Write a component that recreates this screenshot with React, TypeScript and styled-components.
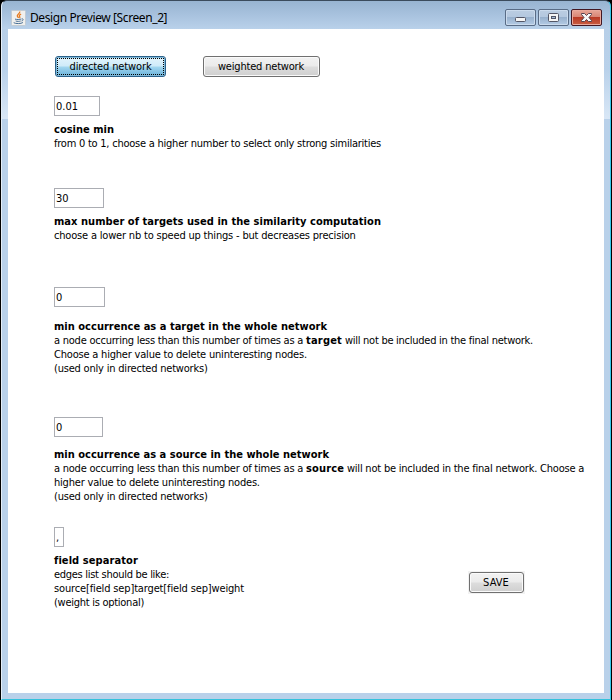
import React from 'react';
import styled, { createGlobalStyle, css } from 'styled-components';

const GlobalStyle = createGlobalStyle`
  body { margin: 0; background: #000; overflow: hidden; }
  * { box-sizing: border-box; }
`;

const uiFont = css`
  font-family: "DejaVu Sans Condensed", "DejaVu Sans", sans-serif;
  font-size: 11px;
  line-height: 14px;
  color: #000;
`;

const Window = styled.div`
  ${uiFont}
  display: flex;
  flex-direction: column;
  width: 612px;
  height: 700px;
  padding: 0 1px 0 1px;
  background: #000;
`;

const Frame = styled.div`
  flex: 1;
  display: flex;
  flex-direction: column;
  border-top: 1px solid #3b4b5c;
  border-left: 1px solid #e4eef8;
  border-right: 1px solid #35c9ea;
  border-bottom: 1px solid #35c2dc;
  border-radius: 6px 6px 0 0;
  overflow: hidden;
  background:
    linear-gradient(#98b4d1, #a8c2de 50%, #b9d1ea) 0 0 / 100% 28px no-repeat,
    linear-gradient(#b7cfe8, #b9d1ea 45%, #d9e7f6) 0 28px / 100% 90px no-repeat,
    #b9d1ea;
`;

const TitleBar = styled.header`
  display: flex;
  align-items: center;
  height: 28px;
  padding: 5px 8px 0 9px;
`;

const Title = styled.h1`
  flex: 1;
  margin: 0 0 0 4px;
  font: 400 12px/16px "Noto Sans", sans-serif;
  letter-spacing: -0.4px;
  white-space: nowrap;
`;

const Controls = styled.div`
  display: flex;
  gap: 2px;
`;

const ControlButton = styled.button<{ $close?: boolean }>`
  display: flex;
  align-items: center;
  justify-content: center;
  width: 31px;
  height: 17px;
  padding: 0;
  border: 1px solid ${p => (p.$close ? '#431722' : '#596c86')};
  border-radius: 2px;
  box-shadow: inset 0 0 0 1px ${p => (p.$close ? '#e9a99d' : '#cbdbed')};
  background: ${p =>
    p.$close
      ? 'linear-gradient(#e7a798, #d98575 45%, #b93a25 50%, #c95e43)'
      : 'linear-gradient(#bbcde2, #b4c8df 45%, #98b1cd 50%, #b4cbe5)'};
`;

const Client = styled.main`
  flex: 1;
  margin: 0 6px 6px 6px;
  padding: 27px 0 0 46px;
  background: #fff;
`;

const ModeBar = styled.div`
  display: flex;
  gap: 37px;
  height: 22px;
  padding-left: 1px;
`;

const PushButton = styled.button<{ $width: number; $track: number; $active?: boolean }>`
  ${uiFont}
  width: ${p => p.$width}px;
  height: 21px;
  padding: ${p => (p.$active ? '0 0 1px' : '1px 1px 0 0')};
  letter-spacing: ${p => p.$track}px;
  border: 1px solid ${p => (p.$active ? '#2c628b' : '#707070')};
  border-radius: 3px;
  outline: none;
  background: ${p =>
    p.$active
      ? 'linear-gradient(#e3f4fc, #cfebf9 48%, #a3d7f0 52%, #69b2da)'
      : 'linear-gradient(#f2f2f2, #ebebeb 48%, #dddddd 52%, #cfcfcf)'};
  box-shadow: inset 0 0 0 1px ${p => (p.$active ? '#7fb9d9' : '#fafafa')};
`;

const FocusRing = styled.span`
  display: block;
  height: 17px;
  margin: 1px 1px 0;
  line-height: 15px;
  border: 1px dotted #000;
`;

const Field = styled.section<{ $before: number }>`
  margin-top: ${p => p.$before}px;
`;

const Input = styled.input<{ $width: number }>`
  ${uiFont}
  display: block;
  width: ${p => p.$width}px;
  height: 20px;
  margin: 0;
  padding: 0 1px;
  border: 1px solid #abadb3;
  border-radius: 0;
  background: #fff;
  outline: none;
`;

const Description = styled.div<{ $gap: number }>`
  padding-top: ${p => p.$gap}px;
`;

const Line = styled.div`
  height: 14px;
  white-space: pre;
`;

const Run = styled.span<{ $track?: number }>`
  letter-spacing: ${p => p.$track ?? -0.2}px;
`;

const Strong = styled.strong<{ $track?: number }>`
  font-weight: 700;
  letter-spacing: ${p => p.$track ?? 0.03}px;
`;

const LastRow = styled.div`
  display: flex;
  align-items: flex-start;
`;

const LastText = styled.div`
  width: 414px;
`;

const SaveHolder = styled.div`
  display: flex;
  height: 23px;
  margin-top: 24px;
  padding: 1px;
  background: #f2f2f2;
`;

function JavaIcon() {
  return (
    <svg width="15" height="16" viewBox="0 0 15 16" fill="none">
      <rect x=".5" y=".5" width="14" height="15" rx="1" fill="#f0f0ee" stroke="#c2cbd3" />
      <path d="M8.7 1.6c.8 2-3 2.7-2.4 4.4.3.8 1 1.2 1.1 2M10.1 4.2c-1.9.8-2.2 1.4-1.4 2.5.4.6.1 1-.3 1.3" stroke="#e77b20" strokeWidth="1.3" />
      <path d="M4 9.1c1.8.6 4.7.5 6.3-.1M4.7 11c1.6.5 3.6.5 5 0M10.8 8.9c2.1-.3 1.6 1.7-.2 2.1M2.7 12.7c1.8 1.2 7.4 1.2 9.2-.2" stroke="#476f96" />
    </svg>
  );
}

function MinimizeIcon() {
  return (
    <svg width="11" height="9" viewBox="0 0 11 9">
      <rect x=".5" y="4.5" width="10" height="4" rx="1" fill="#f5f5f5" stroke="#535666" />
    </svg>
  );
}

function MaximizeIcon() {
  return (
    <svg width="11" height="9" viewBox="0 0 11 9">
      <rect x=".5" y=".5" width="10" height="8" rx="1" fill="#f5f5f5" stroke="#535666" />
      <rect x="3.5" y="3.5" width="4" height="2" fill="#a6bdd8" stroke="#535666" />
    </svg>
  );
}

function CloseIcon() {
  return (
    <svg width="11" height="9" viewBox="0 0 11 9">
      <path d="M.5.5h3l2 2 2-2h3v1L8 4.5l2.5 3v1h-3l-2-2-2 2h-3v-1L3 4.5.5 1.5z" fill="#f7f7f7" stroke="#56434f" />
    </svg>
  );
}

export default function App() {
  return (
    <>
      <GlobalStyle />
      <Window>
        <Frame>
          <TitleBar>
            <JavaIcon />
            <Title>Design Preview [Screen_2]</Title>
            <Controls>
              <ControlButton aria-label="Minimize"><MinimizeIcon /></ControlButton>
              <ControlButton aria-label="Maximize"><MaximizeIcon /></ControlButton>
              <ControlButton $close aria-label="Close"><CloseIcon /></ControlButton>
            </Controls>
          </TitleBar>
          <Client>
            <ModeBar>
              <PushButton $width={111} $track={-0.12} $active>
                <FocusRing>directed network</FocusRing>
              </PushButton>
              <PushButton $width={117} $track={-0.19}>weighted network</PushButton>
            </ModeBar>

            <Field $before={18}>
              <Input $width={46} defaultValue="0.01" />
              <Description $gap={7}>
                <Line><Strong $track={0.01}>cosine min</Strong></Line>
                <Line><Run $track={-0.234}>from 0 to 1, choose a higher number to select only strong similarities</Run></Line>
              </Description>
            </Field>

            <Field $before={37}>
              <Input $width={50} defaultValue="30" />
              <Description $gap={7}>
                <Line><Strong $track={0.045}>max number of targets used in the similarity computation</Strong></Line>
                <Line><Run $track={-0.185}>choose a lower nb to speed up things - but decreases precision</Run></Line>
              </Description>
            </Field>

            <Field $before={44}>
              <Input $width={51} defaultValue="0" />
              <Description $gap={13}>
                <Line><Strong $track={0.022}>min occurrence as a target in the whole network</Strong></Line>
                <Line>
                  <Run $track={-0.235}>a node occurring less than this number of times as a </Run>
                  <Strong $track={0.195}>target</Strong>
                  <Run $track={-0.26}> will not be included in the final network.</Run>
                </Line>
                <Line><Run>Choose a higher value to delete uninteresting nodes.</Run></Line>
                <Line><Run>(used only in directed networks)</Run></Line>
              </Description>
            </Field>

            <Field $before={41}>
              <Input $width={49} defaultValue="0" />
              <Description $gap={11}>
                <Line><Strong $track={0.014}>min occurrence as a source in the whole network</Strong></Line>
                <Line>
                  <Run $track={-0.235}>a node occurring less than this number of times as a </Run>
                  <Strong $track={0.133}>source</Strong>
                  <Run $track={-0.21}> will not be included in the final network. Choose a</Run>
                </Line>
                <Line><Run>higher value to delete uninteresting nodes.</Run></Line>
                <Line><Run>(used only in directed networks)</Run></Line>
              </Description>
            </Field>

            <Field $before={23}>
              <Input $width={10} defaultValue="," />
              <LastRow>
                <LastText>
                  <Description $gap={7}>
                    <Line><Strong $track={0.08}>field separator</Strong></Line>
                    <Line><Run $track={-0.287}>edges list should be like:</Run></Line>
                    <Line><Run $track={-0.145}>source[field sep]target[field sep]weight</Run></Line>
                    <Line><Run $track={-0.27}>(weight is optional)</Run></Line>
                  </Description>
                </LastText>
                <SaveHolder>
                  <PushButton $width={55} $track={0.05}>SAVE</PushButton>
                </SaveHolder>
              </LastRow>
            </Field>
          </Client>
        </Frame>
      </Window>
    </>
  );
}
